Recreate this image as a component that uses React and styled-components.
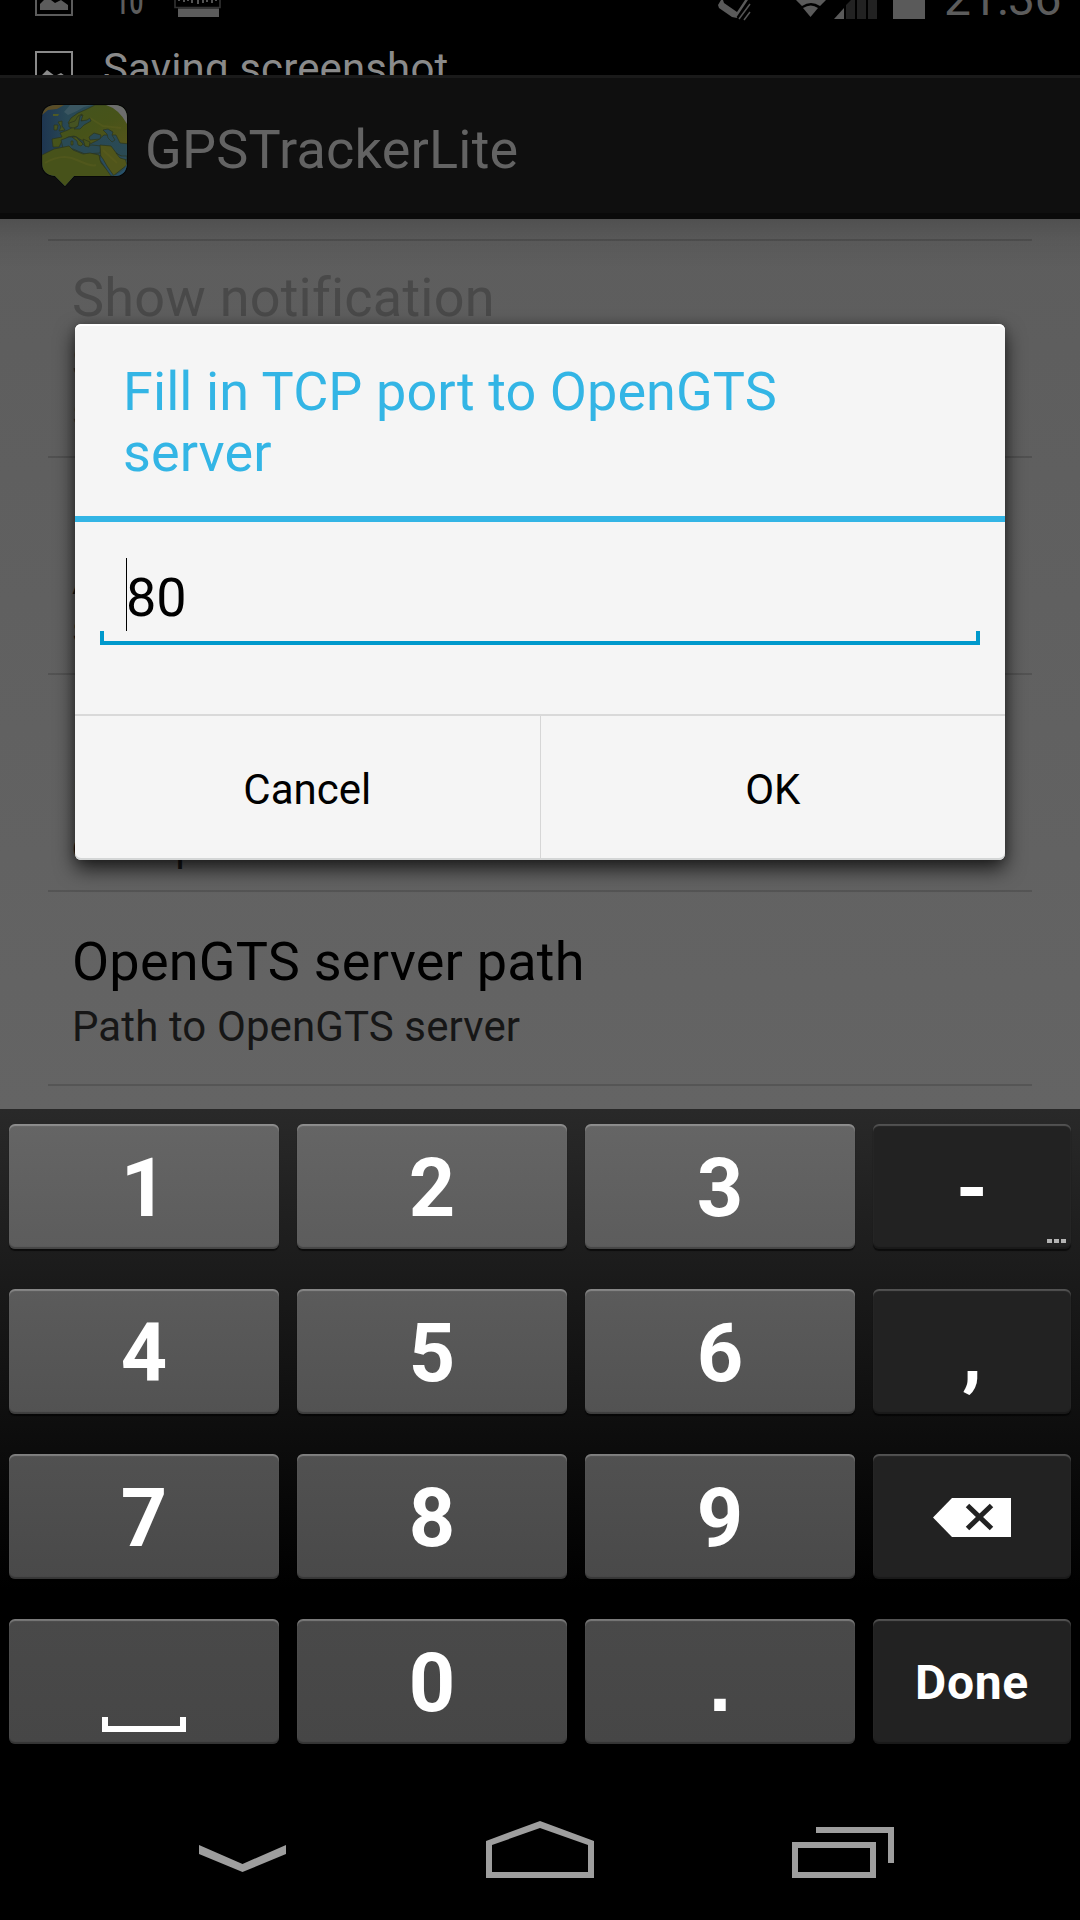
import React from "react";
import styled, { createGlobalStyle } from "styled-components";

const GlobalStyle = createGlobalStyle`
  *, *::before, *::after { box-sizing: border-box; }
  body { margin: 0; background: #000; }
  button { border: 0; padding: 0; margin: 0; background: none; font: inherit; color: inherit; }
`;

const Screen = styled.div`
  position: relative;
  display: flex;
  flex-direction: column;
  width: 1080px;
  height: 1920px;
  overflow: hidden;
  background: #000;
  font-family: Roboto, "Liberation Sans", sans-serif;
`;

const StatusBar = styled.header`
  display: flex;
  flex-direction: column;
  flex: none;
  height: 75px;
  overflow: hidden;
`;

const StatusIcons = styled.div`
  display: flex;
  justify-content: space-between;
  flex: none;
  height: 51px;
  padding: 0 19px 0 35px;
`;

const StatusGroup = styled.div`
  display: flex;
  align-items: flex-start;
`;

const Clock = styled.span`
  margin: -1px 0 0 16px;
  font-size: 48px;
  line-height: 0;
  letter-spacing: -0.5px;
  color: #5c5c5c;
  white-space: nowrap;
`;

const Counter = styled.span`
  width: 101px;
  padding-left: 42px;
  margin-top: 1px;
  font-size: 38px;
  font-weight: 500;
  line-height: 0;
  color: #5c5c5c;

  span {
    display: inline-block;
    transform: scaleX(0.66);
    transform-origin: 0 0;
  }
`;

const Ticker = styled.div`
  display: flex;
  flex: none;
  gap: 30px;
  padding-left: 35px;
  font-size: 42px;
  line-height: 36px;
  letter-spacing: 0.14px;
  color: #8a8a8a;
  white-space: nowrap;
`;

const ActionBar = styled.div`
  display: flex;
  flex: none;
  height: 144px;
  padding: 0 0 0 40px;
  gap: 16px;
  background: #0f0f0f;
  border-top: 3px solid #1a1a1a;
  border-bottom: 6px solid #0a0a0a;
`;

const LogoSvg = styled.svg`
  flex: none;
  margin-top: 25px;
`;

const AppTitle = styled.h1`
  margin: 0 0 0 -1px;
  font-size: 54px;
  font-weight: 400;
  line-height: 144px;
  height: 135px;
  letter-spacing: 0.22px;
  color: #636363;
`;

const Settings = styled.main`
  flex: none;
  height: 890px;
  padding: 20px 48px 0;
  overflow: hidden;
  background:
    linear-gradient(rgba(0, 0, 0, 0.14), rgba(0, 0, 0, 0.05) 20px, rgba(0, 0, 0, 0) 50px),
    linear-gradient(#5d5d5d, #646464);
`;

const SettingRow = styled.section`
  display: flex;
  flex-direction: column;
  justify-content: center;
  height: ${(p) => p.$height}px;
  padding: 4px 24px 0;
  border-top: 2px solid rgba(0, 0, 0, 0.14);
`;

const SettingTitle = styled.h2`
  margin: 0;
  font-size: 54px;
  font-weight: 400;
  line-height: 72px;
  letter-spacing: 0.22px;
  white-space: nowrap;
  color: ${(p) => (p.$disabled ? "#494949" : "#000")};
`;

const SettingSummary = styled.p`
  margin: 0;
  padding: 4px 0 3px;
  font-size: 42px;
  line-height: 49px;
  letter-spacing: 0.1px;
  white-space: pre;
  color: ${(p) => (p.$disabled ? "#383838" : "#161616")};
`;

const ListEnd = styled.div`
  border-top: 2px solid rgba(0, 0, 0, 0.14);
`;

/* Dialog floats above the settings list */
const Dialog = styled.div`
  position: absolute;
  left: 75px;
  top: 324px;
  display: flex;
  flex-direction: column;
  width: 930px;
  height: 536px;
  border-radius: 6px;
  background: #f5f5f5;
  box-shadow:
    inset 0 2px 0 #fff,
    inset 0 -2px 0 #d4d6d6,
    0 9px 20px rgba(0, 0, 0, 0.72),
    0 0 8px rgba(0, 0, 0, 0.2);
`;

const DialogTitle = styled.h2`
  margin: 0;
  height: 198px;
  padding: 37px 110px 0 48px;
  font-size: 54px;
  font-weight: 400;
  line-height: 61px;
  letter-spacing: 0.08px;
  color: #33b5e5;
  border-bottom: 6px solid #33b5e5;
`;

const DialogBody = styled.div`
  display: flex;
  flex-direction: column;
  height: 192px;
  padding: 36px 25px 0;
`;

const Field = styled.div`
  display: flex;
  height: 73px;
  padding-left: 26px;
  font-size: 54px;
  line-height: 79px;
  color: #000;
`;

const Caret = styled.span`
  width: 1px;
  height: 73px;
  margin-right: -1px;
  background: #000;
`;

const FieldLine = styled.div`
  height: 14px;
  border: 4px solid #0099cc;
  border-top: 0;
`;

const DialogButtons = styled.div`
  display: flex;
  flex: 1;
  border-top: 2px solid #d9d9d9;
`;

const DialogButton = styled.button`
  flex: 1;
  font-size: 42px;
  color: #000;
  padding-top: 3px;

  &:first-child {
    border-right: 1px solid #d6d6d6;
  }
`;

const Keyboard = styled.div`
  display: grid;
  grid-template-columns: 270px 270px 270px 198px;
  grid-auto-rows: 125px;
  gap: 40px 18px;
  flex: none;
  height: 667px;
  padding: 15px 9px 0;
  background: linear-gradient(#292929, #000 480px);
`;

const keyShades = [
  ["#656565", "#5c5c5c"],
  ["#5b5b5b", "#525252"],
  ["#515151", "#494949"],
  ["#494949", "#464646"],
];

const Key = styled.button`
  position: relative;
  display: flex;
  align-items: center;
  justify-content: center;
  border-radius: 6px;
  color: #fff;
  font-weight: 700;
  font-size: ${(p) => (p.$small ? 48 : 81)}px;
  letter-spacing: ${(p) => (p.$small ? 0.7 : 0)}px;
  line-height: 1;
  padding-top: ${(p) => (p.$small ? 2 : 4)}px;
  background: ${(p) =>
    p.$fn ? "#222" : `linear-gradient(${keyShades[p.$row][0]}, ${keyShades[p.$row][1]})`};
  box-shadow:
    inset 0 2px 1px ${(p) => (p.$fn ? "rgba(255,255,255,0.22)" : "rgba(255,255,255,0.27)")},
    inset 0 -2px 1px rgba(0, 0, 0, 0.25),
    0 2px 1px rgba(0, 0, 0, 0.6);
`;

const MoreDots = styled.span`
  position: absolute;
  right: 5px;
  bottom: 6px;
  display: flex;
  gap: 2px;

  i {
    width: 5px;
    height: 4px;
    background: #b4b4b4;
  }
`;

const SquarePeriod = styled.span`
  font-family: "Liberation Sans", sans-serif;
`;

const SpaceMark = styled.span`
  align-self: flex-end;
  width: 84px;
  height: 15px;
  margin-bottom: 12px;
  border: 6px solid #fff;
  border-top: 0;
`;

const DeleteSvg = styled.svg`
  margin-top: -2px;
`;

const NavBar = styled.nav`
  display: flex;
  align-items: flex-start;
  flex: none;
  height: 144px;
  padding-left: 198px;
`;

const NavIcon = styled.svg`
  flex: none;
  margin: ${(p) => p.$margin};
`;

const PictureIcon = ({ color }) => (
  <svg width="38" height="38" viewBox="0 0 38 38" fill={color}>
    <path fillRule="evenodd" d="M0 0H38V38H0ZM2 2V36H36V2Z" />
    <path d="M5 32V26L12 19L20 25L26 22L33 27V32Z" />
  </svg>
);

const PictureSlot = styled.div`
  width: 38px;
  height: 38px;
  margin-top: ${(p) => p.$top || 0}px;
`;

const KeyboardIcon = () => (
  <svg width="48" height="19" viewBox="0 0 48 19">
    <path d="M1 0V7.5H46V0" fill="none" stroke="#333" strokeWidth="1.6" />
    <path d="M5 0V1M10 0V2M14 0V1M18 0V3M24 0V4M29 0V3M33 0V2M38 0V3M42 0V1" stroke="#777" strokeWidth="1.4" />
    <rect x="4" y="8.5" width="41" height="8.5" fill="#5c5c5c" />
  </svg>
);

const StatusSvg = () => (
  <svg width="210" height="24" viewBox="0 0 210 24">
    <path d="M3 0L0 5L1 8L14 17L19 18L23 13L30 1L32 0H27L19 12L6 3L5 0Z" fill="#5a5a5a" />
    <path d="M20 18L32 0M22 20L33 4M25 20L32 12" stroke="#000" strokeWidth="3.4" />
    <path d="M21 19L32 4M26 20L32 12" stroke="#555" strokeWidth="1.5" />
    <path d="M78 0H108L102 6Q93 0 84 6Z" fill="#5a5a5a" />
    <path d="M85 8Q93 3 100 8L92.500 17Z" fill="#5a5a5a" />
    <path d="M116 19L126 8V19Z" fill="#5a5a5a" />
    <path d="M128 19V5L133 0H137V19ZM139 0H148V19H139ZM150 0H159V19H150Z" fill="#222" />
    <rect x="175" y="0" width="32" height="19" fill="#5a5a5a" />
  </svg>
);

const Logo = () => (
  <LogoSvg width="90" height="90" viewBox="0 0 90 90">
    <defs>
      <clipPath id="bubble">
        <path d="M16 2H74Q87 2 87 16V59Q87 73 74 73H34L25 83L15 73Q2 72 2 59V16Q2 2 16 2Z" />
      </clipPath>
      <linearGradient id="sea" x1="0" y1="0" x2="1" y2="0">
        <stop offset="0" stopColor="#1d3450" />
        <stop offset="0.3" stopColor="#284855" />
        <stop offset="1" stopColor="#2a4a54" />
      </linearGradient>
      <linearGradient id="land" x1="0" y1="0" x2="1" y2="1">
        <stop offset="0" stopColor="#43531f" />
        <stop offset="0.55" stopColor="#475319" />
        <stop offset="1" stopColor="#57551b" />
      </linearGradient>
    </defs>
    <path d="M16 1H74Q88 1 88 16V60Q88 74 74 74H34L25 84L15 74Q1 73 1 60V16Q1 1 16 1Z" fill="#070707" />
    <g clipPath="url(#bubble)">
      <rect width="90" height="90" fill="url(#sea)" />
      <path d="M2 2H24L17 6L8 7L2 12Z" fill="#5a4d27" />
      <path d="M13 11L19 11L18 13L13 13Z" fill="#4f5a25" />
      <path d="M30 2H52L44 4L37 8L28 12L24 9Z" fill="#3a5661" />
      <g stroke="#2b351c" strokeWidth="0.7">
        <path d="M28 20L31 15L38 10L45 7L55 2H90V41L80 40L76 32L64 32L58 37L50 41L46 43L43 38L38 35L34 33L28 34L22 38L19 44L13 44L12 36L22 34L20 30L28 27L33 24Z" fill="url(#land)" />
        <path d="M18 19L22 18L22 23L25 27L19 28L21 24Z M14 22L18 22L17 27L14 27Z" fill="#455321" />
        <path d="M29 20L35 18L38 13L42 11L40 17L43 18L39 23L33 25L29 24Z" fill="#455321" />
        <path d="M40 13L43 12L41 18L47 17L50 15L51 18L44 22L40 26L34 26L38 23Z" fill="#2a4a52" />
        <path d="M49 34L54 30L61 32L60 36L50 37ZM63 27L68 26L73 29L72 32L75 37L72 39L68 35L67 31ZM21 37L29 34L37 34L45 43L52 42L61 43L60 50L45 51L33 46L23 45Z" fill="#2a4a54" />
        <path d="M32 34L36 34L43 41L41 43L38 42L37 38ZM43 36L50 39L49 44L45 43ZM31 38L33 38L33 42L31 42Z" fill="#47531b" />
        <path d="M2 52L14 46L29 43L33 47L43 51L50 50L59 52L61 60L73 73L71 84H2Z" fill="#47521a" />
        <path d="M60 42L71 43L77 51L85 55L87 62L73 73L61 57Z" fill="#50551b" />
        <path d="M60 52L63 56L67 63L74 73H71L64 63L60 57ZM76 50L81 53L87 53V57L80 55Z" fill="#2a4c5c" />
      </g>
      <path d="M66 2Q79 6 87 21V2Z" fill="#6d6d6d" />
      <path d="M72 73Q83 71 87 61V75H72Z" fill="#28516b" />
      <path d="M5 60Q22 50 37 57T56 62M63 47L77 60M50 15L63 23L81 25" fill="none" stroke="#666322" strokeOpacity="0.3" strokeWidth="2" />
    </g>
  </LogoSvg>
);

const DeleteIcon = () => (
  <DeleteSvg width="80" height="40" viewBox="0 0 80 40">
    <path d="M1 19.500L20 0H79V39H20Z" fill="#fff" />
    <path d="M35.500 7.500L59.500 30.500M59.500 7.500L35.500 30.500" stroke="#222" strokeWidth="5" />
  </DeleteSvg>
);

const settings = [
  { title: "Show notification", summary: "Show notification in\nstatus bar", height: 217, disabled: true },
  { title: "OpenGTS server", summary: "Address of OpenGTS\nserver", height: 217 },
  { title: "OpenGTS server port", summary: "Fill in TCP port to server,\nexample: 80", height: 217 },
  { title: "OpenGTS server path", summary: "Path to OpenGTS server", height: 194 },
];

const keyRows = [
  ["1", "2", "3", "-"],
  ["4", "5", "6", ","],
  ["7", "8", "9", "delete"],
  ["space", "0", ".", "Done"],
];

function KeyFace({ name }) {
  if (name === "delete") return <DeleteIcon />;
  if (name === "space") return <SpaceMark />;
  if (name === ".") return <SquarePeriod>.</SquarePeriod>;
  return name;
}

export default function App() {
  return (
    <Screen>
      <GlobalStyle />
      <StatusBar>
        <StatusIcons>
          <StatusGroup>
            <PictureSlot $top={-22}><PictureIcon color="#5c5c5c" /></PictureSlot>
            <Counter><span>10</span></Counter>
            <KeyboardIcon />
          </StatusGroup>
          <StatusGroup>
            <StatusSvg />
            <Clock>21:36</Clock>
          </StatusGroup>
        </StatusIcons>
        <Ticker>
          <PictureSlot><PictureIcon color="#8a8a8a" /></PictureSlot>
          Saving screenshot
        </Ticker>
      </StatusBar>

      <ActionBar>
        <Logo />
        <AppTitle>GPSTrackerLite</AppTitle>
      </ActionBar>

      <Settings>
        {settings.map((s) => (
          <SettingRow key={s.title} $height={s.height}>
            <SettingTitle $disabled={s.disabled}>{s.title}</SettingTitle>
            <SettingSummary $disabled={s.disabled}>{s.summary}</SettingSummary>
          </SettingRow>
        ))}
        <ListEnd />
      </Settings>

      <Keyboard>
        {keyRows.map((row, r) =>
          row.map((name, c) => (
            <Key key={name} $row={r} $fn={c === 3} $small={name === "Done"}>
              <KeyFace name={name} />
              {name === "-" && (
                <MoreDots><i /><i /><i /></MoreDots>
              )}
            </Key>
          ))
        )}
      </Keyboard>

      <NavBar>
        <NavIcon $margin="69px 0 0 0" width="89" height="28" viewBox="0 0 89 28">
          <path d="M1 0L44.500 19L88 0V9L44.500 27L1 9Z" fill="#9e9e9e" />
        </NavIcon>
        <NavIcon $margin="45px 0 0 199px" width="108" height="57" viewBox="0 0 108 57">
          <path fillRule="evenodd" d="M0 20L54 0L108 20V57H0ZM6 24V51H102V24L54 7Z" fill="#9e9e9e" />
        </NavIcon>
        <NavIcon $margin="51px 0 0 198px" width="102" height="51" viewBox="0 0 102 51">
          <path fillRule="evenodd" d="M0 15H84V51H0ZM6 21V45H78V21ZM24 0H102V36H96V6H24Z" fill="#9e9e9e" />
        </NavIcon>
      </NavBar>

      <Dialog>
        <DialogTitle>Fill in TCP port to OpenGTS server</DialogTitle>
        <DialogBody>
          <Field>
            <Caret />
            80
          </Field>
          <FieldLine />
        </DialogBody>
        <DialogButtons>
          <DialogButton>Cancel</DialogButton>
          <DialogButton>OK</DialogButton>
        </DialogButtons>
      </Dialog>
    </Screen>
  );
}
